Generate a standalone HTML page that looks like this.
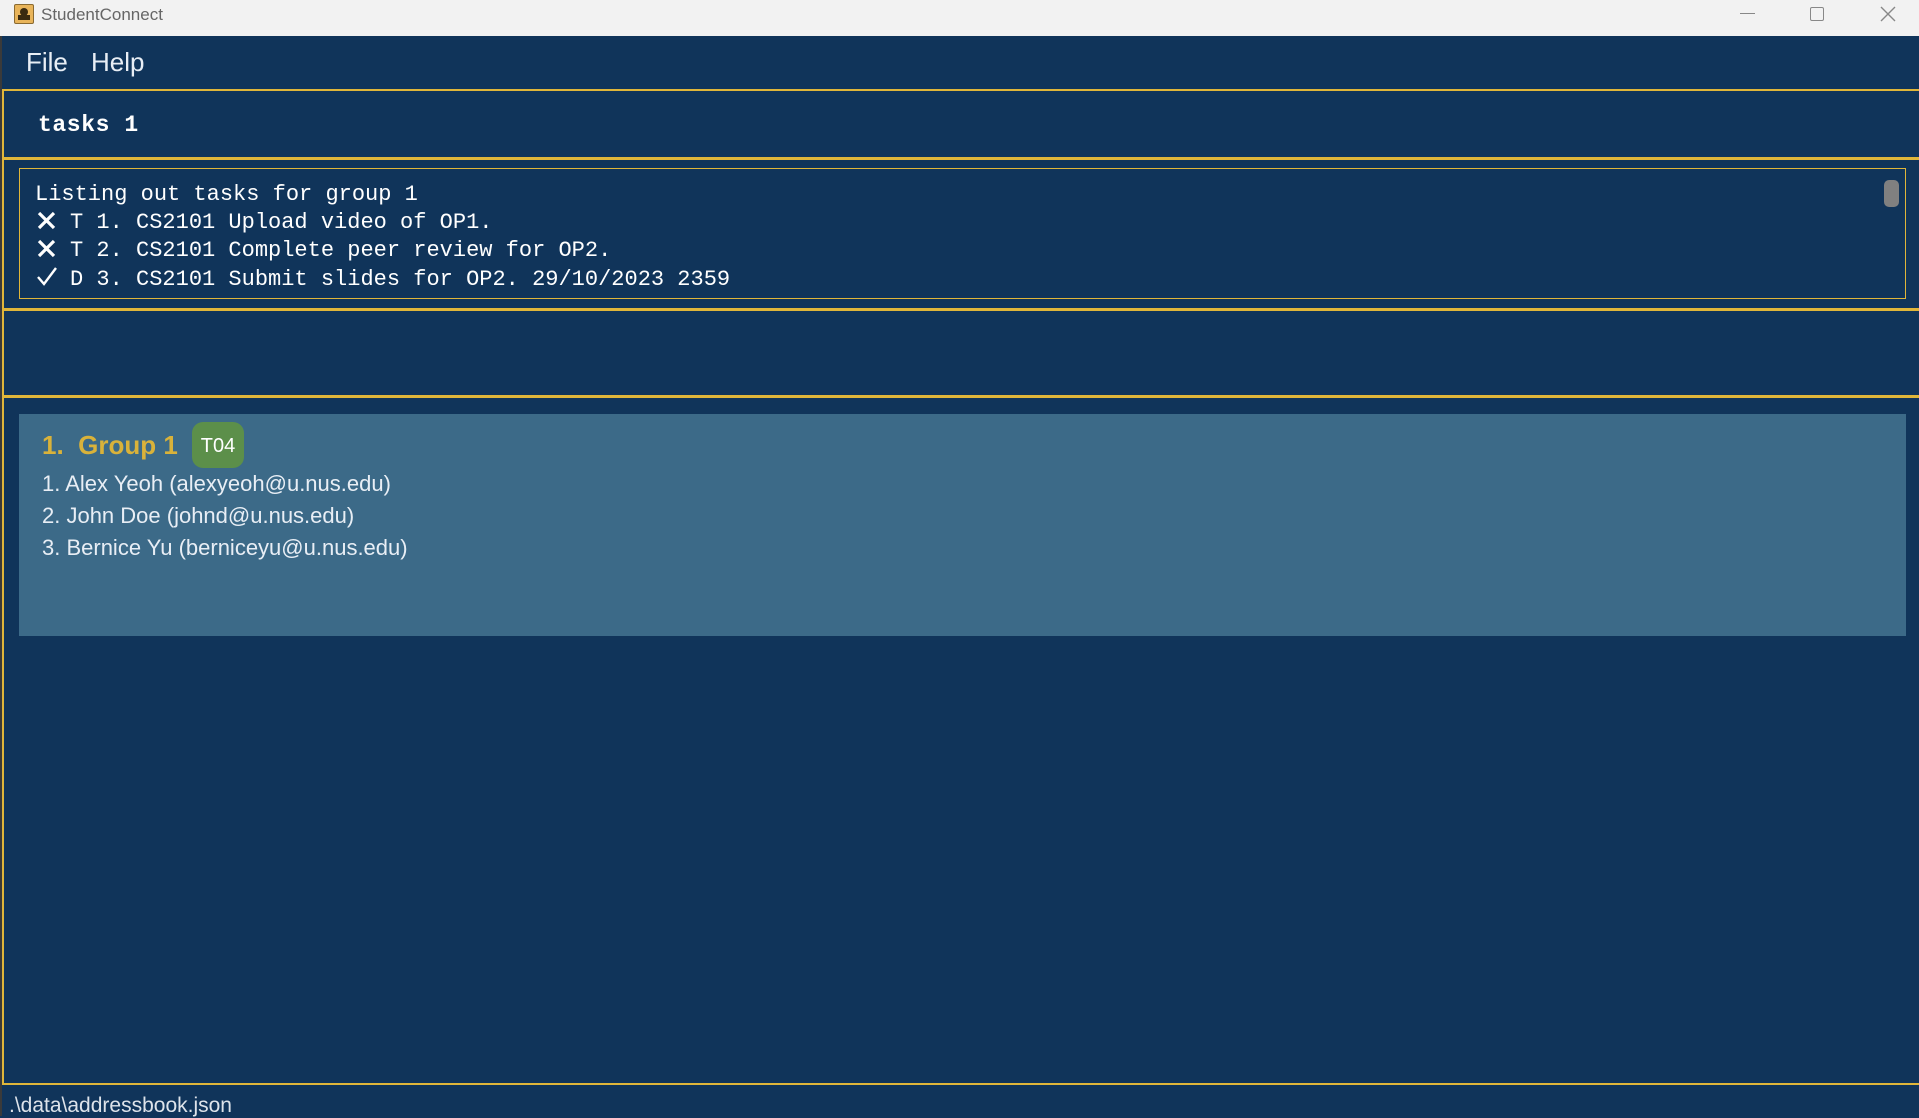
<!DOCTYPE html>
<html><head><meta charset="utf-8"><style>
*{margin:0;padding:0;box-sizing:border-box}
body{width:1919px;height:1116px;overflow:hidden;background:#10345a;position:relative;font-family:"Liberation Sans",sans-serif}
.abs{position:absolute}
.mono{font-family:"Liberation Mono",monospace;font-size:22px;color:#fff;white-space:pre;line-height:28px}
.gold{background:#e0b63a}
</style></head><body>
<div class="abs" style="left:0;top:0;width:1919px;height:36px;background:#f2f2f2"></div>
<div class="abs" style="left:14px;top:4px;width:20px;height:20px;background:#e8b45a;border:1px solid #8a6a30;border-radius:2px"></div>
<div class="abs" style="left:20px;top:8px;width:8px;height:8px;background:#3a2a10;border-radius:50%"></div>
<div class="abs" style="left:18px;top:15px;width:12px;height:5px;background:#3a2a10"></div>
<div class="abs" style="left:41px;top:5px;font-size:17px;color:#666">StudentConnect</div>
<div class="abs" style="left:1740px;top:13px;width:15px;height:1px;background:#888"></div>
<div class="abs" style="left:1810px;top:7px;width:14px;height:14px;border:1.5px solid #888;border-radius:2px"></div>
<svg class="abs" style="left:1880px;top:6px" width="16" height="16"><path d="M1 1L15 15M15 1L1 15" stroke="#888" stroke-width="1.4"/></svg>
<div class="abs" style="left:0;top:36px;width:2px;height:1080px;background:#3a3a3a"></div>
<div class="abs" style="left:26px;top:47px;font-size:26px;color:#e8eef5">File</div>
<div class="abs" style="left:91px;top:47px;font-size:26px;color:#e8eef5">Help</div>
<div class="abs gold" style="left:2px;top:89px;width:1917px;height:1.5px"></div>
<div class="abs gold" style="left:2px;top:89px;width:1.5px;height:995px"></div>
<div class="abs gold" style="left:2px;top:1083px;width:1917px;height:1.5px"></div>
<div class="abs gold" style="left:2px;top:157px;width:1917px;height:3px"></div>
<div class="abs gold" style="left:2px;top:308px;width:1917px;height:3px"></div>
<div class="abs gold" style="left:2px;top:395px;width:1917px;height:2.5px"></div>
<div class="abs mono" style="left:38px;top:111px;font-weight:bold;font-size:23px;letter-spacing:0.6px">tasks 1</div>
<div class="abs" style="left:19px;top:168px;width:1887px;height:131px;border:1.5px solid #e0b63a"></div>
<div class="abs" style="left:1884px;top:180px;width:15px;height:27px;background:#808080;border-radius:5px"></div>
<div class="abs mono" style="left:35px;top:181px">Listing out tasks for group 1</div>
<svg class="abs" style="left:37px;top:211px" width="19" height="19"><path d="M2 2L17 17M17 2L2 17" stroke="#fff" stroke-width="3.2"/></svg>
<div class="abs mono" style="left:70px;top:209px">T 1. CS2101 Upload video of OP1.</div>
<svg class="abs" style="left:37px;top:239px" width="19" height="19"><path d="M2 2L17 17M17 2L2 17" stroke="#fff" stroke-width="3.2"/></svg>
<div class="abs mono" style="left:70px;top:237px">T 2. CS2101 Complete peer review for OP2.</div>
<svg class="abs" style="left:36px;top:266px" width="22" height="20"><path d="M2 11L8 18L20 2" fill="none" stroke="#fff" stroke-width="2.4"/></svg>
<div class="abs mono" style="left:70px;top:266px">D 3. CS2101 Submit slides for OP2. 29/10/2023 2359</div>
<div class="abs" style="left:19px;top:414px;width:1887px;height:222px;background:#3c6a88"></div>
<div class="abs" style="left:42px;top:430px;font-size:26px;font-weight:bold;color:#d9b23a;white-space:pre">1.  Group 1</div>
<div class="abs" style="left:192px;top:422px;width:52px;height:46px;background:#5c8f4a;border-radius:11px;color:#fff;font-size:20px;text-align:center;line-height:48px">T04</div>
<div class="abs" style="left:42px;top:468px;font-size:22px;color:#e8eef5;line-height:32px">1. Alex Yeoh (alexyeoh@u.nus.edu)<br>2. John Doe (johnd@u.nus.edu)<br>3. Bernice Yu (berniceyu@u.nus.edu)</div>
<div class="abs" style="left:9px;top:1094px;font-size:21px;color:#dde3ea">.\data\addressbook.json</div>
</body></html>
